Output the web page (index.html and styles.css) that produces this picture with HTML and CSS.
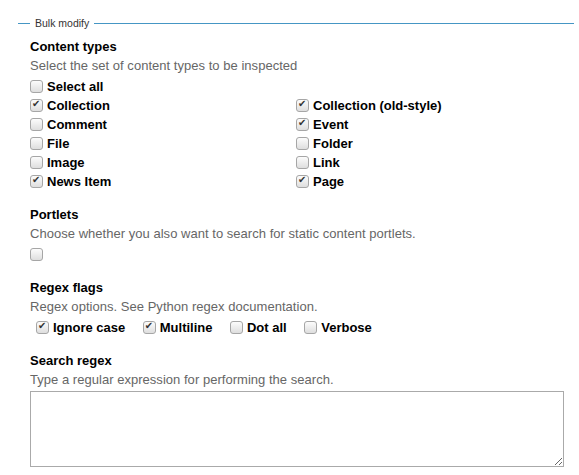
FILE: index.html
```html
<!DOCTYPE html>
<html>
<head>
<meta charset="utf-8">
<link rel="stylesheet" href="styles.css">
</head>
<body>
<fieldset class="bulk">
  <legend class="legend">Bulk modify</legend>

  <div class="field">
    <div class="label">Content types</div>
    <div class="help">Select the set of content types to be inspected</div>
    <label class="opt"><input type="checkbox" class="cb"><span>Select all</span></label>
    <div class="grid">
      <label class="opt"><input type="checkbox" class="cb" checked><span>Collection</span></label>
      <label class="opt"><input type="checkbox" class="cb" checked><span>Collection (old-style)</span></label>
      <label class="opt"><input type="checkbox" class="cb"><span>Comment</span></label>
      <label class="opt"><input type="checkbox" class="cb" checked><span>Event</span></label>
      <label class="opt"><input type="checkbox" class="cb"><span>File</span></label>
      <label class="opt"><input type="checkbox" class="cb"><span>Folder</span></label>
      <label class="opt"><input type="checkbox" class="cb"><span>Image</span></label>
      <label class="opt"><input type="checkbox" class="cb"><span>Link</span></label>
      <label class="opt"><input type="checkbox" class="cb" checked><span>News Item</span></label>
      <label class="opt"><input type="checkbox" class="cb" checked><span>Page</span></label>
    </div>
  </div>

  <div class="field">
    <div class="label">Portlets</div>
    <div class="help">Choose whether you also want to search for static content portlets.</div>
    <label class="opt"><input type="checkbox" class="cb"></label>
  </div>

  <div class="field">
    <div class="label">Regex flags</div>
    <div class="help">Regex options. See Python regex documentation.</div>
    <div class="inline">
      <label class="opt"><input type="checkbox" class="cb" checked><span>Ignore case</span></label>
      <label class="opt"><input type="checkbox" class="cb" checked><span>Multiline</span></label>
      <label class="opt"><input type="checkbox" class="cb"><span>Dot all</span></label>
      <label class="opt"><input type="checkbox" class="cb"><span>Verbose</span></label>
    </div>
  </div>

  <div class="field">
    <div class="label">Search regex</div>
    <div class="help">Type a regular expression for performing the search.</div>
    <textarea class="ta"></textarea>
  </div>
</fieldset>
</body>
</html>
```
FILE: styles.css
```css
html, body {
  margin: 0;
  padding: 0;
  background: #fff;
  font-family: "Liberation Sans", Arial, sans-serif;
  color: #000;
}
.bulk {
  margin: 17px 5px 0 18px;
  padding: 0 0 0 12px;
  border: none;
  border-top: 1px solid #4596c4;
  min-width: 0;
}
.legend {
  padding: 0 5px;
  font-size: 10.5px;
  color: #333;
}
.field {
  margin-top: 9px;
}
.field + .field {
  margin-top: 15px;
}
.label {
  font-size: 13px;
  font-weight: bold;
  line-height: 17px;
}
.help {
  font-size: 13px;
  letter-spacing: 0.03px;
  color: #666;
  line-height: 19px;
  margin: 1px 0 2px;
}
.opt {
  display: flex;
  align-items: center;
  height: 19px;
  font-size: 13px;
  font-weight: bold;
  white-space: nowrap;
}
.grid {
  display: grid;
  grid-template-columns: 266px 1fr;
}
.cb {
  appearance: none;
  -webkit-appearance: none;
  width: 13px;
  height: 13px;
  margin: 0 4px 0 0;
  border: 1px solid #a6a6a6;
  border-radius: 3px;
  background: linear-gradient(#fcfcfc, #dedede);
  position: relative;
  box-sizing: border-box;
  flex: none;
}
.cb:checked::after {
  content: "\2714";
  position: absolute;
  left: 1px;
  top: -2px;
  font-size: 10px;
  color: #333;
  font-family: "DejaVu Sans", sans-serif;
}
.inline {
  display: flex;
  padding-left: 6px;
}
.inline .opt {
  margin-right: 17.5px;
}
.ta {
  display: block;
  width: 534px;
  height: 76px;
  margin-top: 1px;
  box-sizing: border-box;
  border: 1px solid #aaa;
  resize: vertical;
}
```
